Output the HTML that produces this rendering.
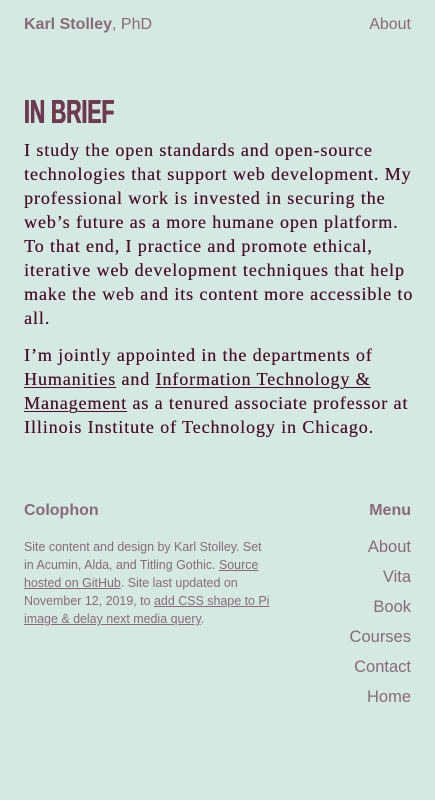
<!DOCTYPE html>
<html><head><meta charset="utf-8"><style>
html,body{margin:0;padding:0;background:#d3e9e1;width:435px;height:800px;overflow:hidden}
body{position:relative;font-family:"Liberation Sans",sans-serif}
.a{position:absolute;white-space:nowrap}
.hd{color:#8a6a78;font-size:16px;top:16px}
h1{position:absolute;left:24px;top:92px;margin:0;font-family:"Liberation Sans Narrow","Liberation Sans",sans-serif;font-weight:bold;font-size:33px;color:#6e3a52;transform:scaleX(.64);transform-origin:left;line-height:40px;text-shadow:.6px 0 0 #6e3a52,-.6px 0 0 #6e3a52}
.p{position:absolute;left:24px;font-family:"Liberation Serif",serif;font-size:18px;line-height:24px;color:#4a0e2a;white-space:nowrap;letter-spacing:.9px;text-shadow:.2px 0 0 #4a0e2a}
.p a{color:#4a0e2a;text-decoration:underline;text-decoration-thickness:1px;text-underline-offset:2px}
.sm{position:absolute;left:24px;top:538px;font-size:12.45px;line-height:18px;color:#8a6a78;white-space:nowrap}
.sm a{color:#8a6a78;text-decoration:underline}
.m{position:absolute;right:24px;color:#8a6a78;font-size:16.5px;text-align:right}
</style></head><body>
<div class="a hd" style="left:24px"><b>Karl Stolley</b>, PhD</div>
<div class="a hd" style="right:24px">About</div>
<h1>IN BRIEF</h1>
<div class="p" style="top:138px">I study the open standards and open-source<br>technologies that support web development. My<br>professional work is invested in securing the<br>web’s future as a more humane open platform.<br>To that end, I practice and promote ethical,<br>iterative web development techniques that help<br>make the web and its content more accessible to<br>all.</div>
<div class="p" style="top:343px">I’m jointly appointed in the departments of<br><a>Humanities</a> and <a>Information Technology &amp;</a><br><a>Management</a> as a tenured associate professor at<br>Illinois Institute of Technology in Chicago.</div>
<div class="a" style="left:24px;top:502px;font-weight:bold;font-size:16px;color:#8a6a78">Colophon</div>
<div class="a" style="right:24px;top:502px;font-weight:bold;font-size:16px;color:#8a6a78">Menu</div>
<div class="sm">Site content and design by Karl Stolley. Set<br>in Acumin, Alda, and Titling Gothic. <a>Source</a><br><a>hosted on GitHub</a>. Site last updated on<br>November 12, 2019, to <a>add CSS shape to Pi</a><br><a>image &amp; delay next media query</a>.</div>
<div class="m" style="top:538px">About</div>
<div class="m" style="top:568px">Vita</div>
<div class="m" style="top:598px">Book</div>
<div class="m" style="top:628px">Courses</div>
<div class="m" style="top:658px">Contact</div>
<div class="m" style="top:688px">Home</div>
</body></html>
